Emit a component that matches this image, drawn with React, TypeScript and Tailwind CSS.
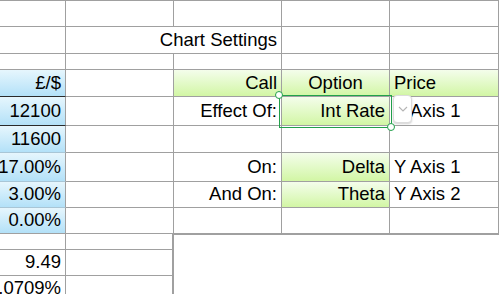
import type { ReactNode } from 'react';

type CellProps = {
  w: string;
  h?: string;
  fill?: 'blue' | 'green' | 'none';
  align?: 'left' | 'right' | 'center';
  line?: string;
  noRight?: boolean;
  children?: ReactNode;
};

const fills = {
  blue: 'bg-gradient-to-b from-[#e6f6fd] to-[#b3e1f8]',
  green: 'bg-gradient-to-b from-[#f4fdeb] to-[#d2f6a4]',
  none: 'bg-white',
};

const aligns = {
  left: 'justify-start pl-[4px]',
  right: 'justify-end pr-[4px]',
  center: 'justify-center',
};

function Cell({ w, h = 'h-full', fill = 'none', align = 'right', line = 'border-b-[#a0a0a0]', noRight, children }: CellProps) {
  return (
    <div
      className={`${w} ${h} ${fills[fill]} ${aligns[align]} ${line} flex shrink-0 items-center overflow-visible whitespace-nowrap border-b ${
        noRight ? '' : 'border-r border-r-[#a0a0a0]'
      }`}
    >
      {children}
    </div>
  );
}

function Row({ h, children }: { h: string; children: ReactNode }) {
  return <div className={`flex ${h}`}>{children}</div>;
}

export default function App() {
  return (
    <div
      className="relative h-[294px] w-[499px] overflow-hidden bg-white text-[18.5px] leading-none text-black"
      style={{ fontFamily: '"Liberation Sans", Arial, sans-serif' }}
    >
      <div className="border-t border-t-[#a0a0a0]">
        <Row h="h-[26px]">
          <Cell w="w-[66px]" />
          <Cell w="w-[108px]" />
          <Cell w="w-[108px]" />
          <Cell w="w-[108px]" />
          <Cell w="w-[109px]" />
        </Row>
        <Row h="h-[27px]">
          <Cell w="w-[66px]" />
          <Cell w="w-[216px]">Chart Settings</Cell>
          <Cell w="w-[108px]" />
          <Cell w="w-[109px]" />
        </Row>
        <Row h="h-[16px]">
          <Cell w="w-[66px]" />
          <Cell w="w-[108px]" />
          <Cell w="w-[108px]" />
          <Cell w="w-[108px]" />
          <Cell w="w-[109px]" />
        </Row>
        <Row h="h-[27px]">
          <Cell w="w-[66px]" fill="blue" line="border-b-[#2a2a2a]">£/$</Cell>
          <Cell w="w-[108px]" />
          <Cell w="w-[108px]" fill="green">Call</Cell>
          <Cell w="w-[108px]" fill="green" align="center">Option</Cell>
          <Cell w="w-[109px]" fill="green" align="left">Price</Cell>
        </Row>
        <Row h="h-[29px]">
          <Cell w="w-[66px]" fill="blue" line="border-b-[#2a2a2a]">12100</Cell>
          <Cell w="w-[108px]" />
          <Cell w="w-[108px]">Effect Of:</Cell>
          <Cell w="w-[108px]" fill="green">Int Rate</Cell>
          <Cell w="w-[109px]" align="left">Y Axis 1</Cell>
        </Row>
        <Row h="h-[27px]">
          <Cell w="w-[66px]" fill="blue" line="border-b-[#a9c6d6]">11600</Cell>
          <Cell w="w-[108px]" />
          <Cell w="w-[108px]" />
          <Cell w="w-[108px]" />
          <Cell w="w-[109px]" />
        </Row>
        <Row h="h-[29px]">
          <Cell w="w-[66px]" fill="blue" line="border-b-[#a9c6d6]">17.00%</Cell>
          <Cell w="w-[108px]" />
          <Cell w="w-[108px]">On:</Cell>
          <Cell w="w-[108px]" fill="green">Delta</Cell>
          <Cell w="w-[109px]" align="left">Y Axis 1</Cell>
        </Row>
        <Row h="h-[26px]">
          <Cell w="w-[66px]" fill="blue" line="border-b-[#a9c6d6]">3.00%</Cell>
          <Cell w="w-[108px]" />
          <Cell w="w-[108px]">And On:</Cell>
          <Cell w="w-[108px]" fill="green">Theta</Cell>
          <Cell w="w-[109px]" align="left">Y Axis 2</Cell>
        </Row>
        <Row h="h-[26px]">
          <Cell w="w-[66px]" fill="blue">0.00%</Cell>
          <Cell w="w-[108px]" />
          <Cell w="w-[108px]" />
          <Cell w="w-[108px]" />
          <Cell w="w-[109px]" />
        </Row>
        <div className="flex">
          <div className="flex w-[172px] shrink-0 flex-col">
            <Row h="h-[16px]">
              <Cell w="w-[66px]" />
              <Cell w="w-[106px]" noRight />
            </Row>
            <Row h="h-[26px]">
              <Cell w="w-[66px]">9.49</Cell>
              <Cell w="w-[106px]" noRight />
            </Row>
            <Row h="h-[26px]">
              <Cell w="w-[66px]">0.0709%</Cell>
              <Cell w="w-[106px]" noRight />
            </Row>
          </div>
          <div className="h-[80px] flex-1 border-l-2 border-t border-[#a0a0a0] bg-white" />
        </div>
      </div>

      {/* selection + popup button over the Int Rate cell */}
      <div className="pointer-events-none absolute left-[279px] top-[95px] h-[33px] w-[113px] border-[1.5px] border-[#22a04b]" />
      <div className="absolute left-[275px] top-[91px] h-[8px] w-[8px] rounded-full border-[1.5px] border-[#22a04b] bg-white" />
      <div className="absolute left-[387px] top-[123px] h-[8px] w-[8px] rounded-full border-[1.5px] border-[#22a04b] bg-white" />
      <div className="absolute left-[393px] top-[95px] flex h-[28px] w-[19px] items-center justify-center rounded-[4px] border border-[#dcdcdc] bg-white shadow-[0_1px_2px_rgba(0,0,0,0.18)]">
        <svg width="10" height="6" viewBox="0 0 10 6" fill="none">
          <path d="M1 1l4 4 4-4" stroke="#b5b5b5" strokeWidth="1.1" />
        </svg>
      </div>
    </div>
  );
}
